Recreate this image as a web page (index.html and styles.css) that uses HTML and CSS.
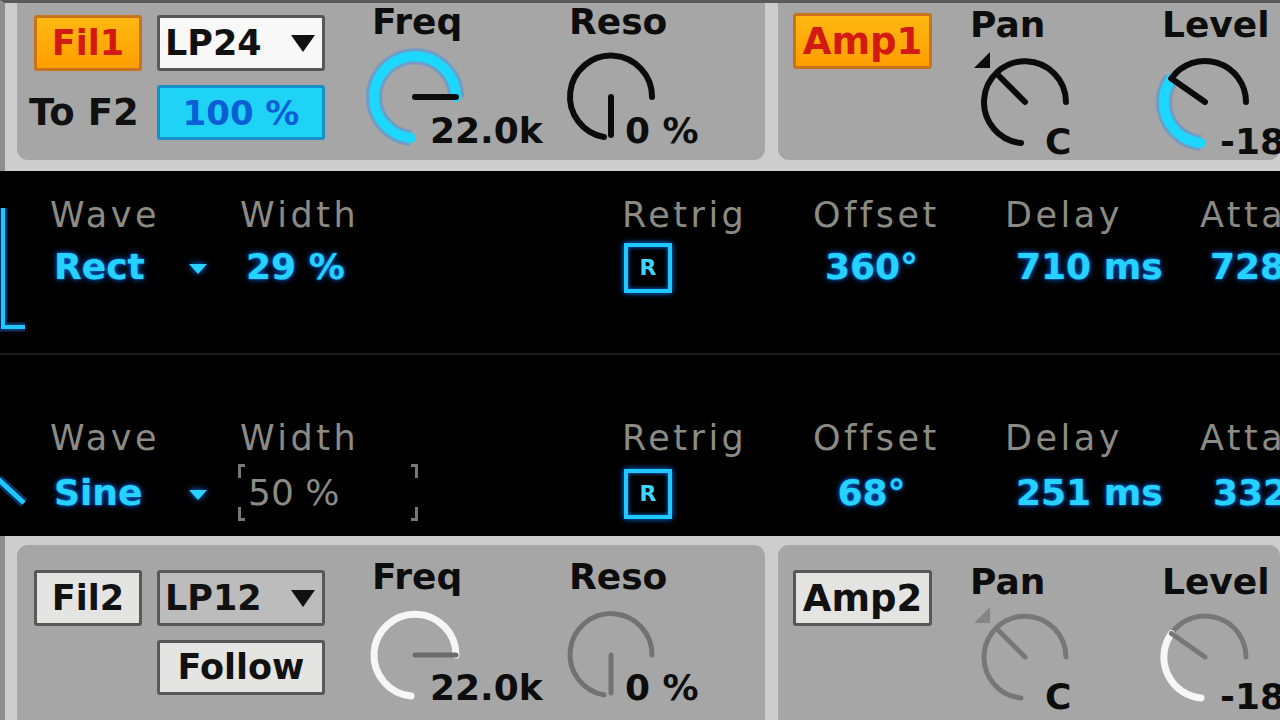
FILE: index.html
```html
<!DOCTYPE html>
<html>
<head>
<meta charset="utf-8">
<title>Analog</title>
<link rel="stylesheet" href="styles.css">
</head>
<body>
<div class="screen">
  <section class="band band-top">
    <div class="panel p-fil">
      <div class="btns">
        <div class="btn btn-on">Fil1</div>
        <div class="btn btn-white dd"><span>LP24</span><span class="tri"></span></div>
        <div class="to">To F2</div>
        <div class="btn btn-cyan">100 %</div>
      </div>
      <div class="knob k-freq">
        <div class="klabel">Freq</div>
        <div class="kbody">
          <svg viewBox="0 0 110 110">
            <path d="M51 96 A41 41 0 1 1 96 55" fill="none" stroke="#0a8cff" stroke-opacity=".35" stroke-width="16"/>
            <path d="M51 96 A41 41 0 1 1 96 55" fill="none" stroke="#1cd8ff" stroke-width="10" stroke-linecap="round"/>
            <line x1="55" y1="55" x2="96" y2="55" stroke="#0b0b0b" stroke-width="6" stroke-linecap="round"/>
          </svg>
          <span class="kval v-freq">22.0k</span>
        </div>
      </div>
      <div class="knob k-reso">
        <div class="klabel">Reso</div>
        <div class="kbody">
          <svg viewBox="0 0 110 110">
            <path d="M48 95 A41 41 0 1 1 96 55" fill="none" stroke="#0b0b0b" stroke-width="6" stroke-linecap="round"/>
            <line x1="55" y1="55" x2="55" y2="93" stroke="#0b0b0b" stroke-width="6" stroke-linecap="round"/>
          </svg>
          <span class="kval v-reso">0 %</span>
        </div>
      </div>
    </div>
    <div class="panel p-amp">
      <div class="btn btn-on amp">Amp1</div>
      <div class="knob k-pan">
        <div class="klabel">Pan</div>
        <div class="kbody">
          <svg viewBox="0 0 110 110">
            <polygon points="20,5 20,21 4,21" fill="#0b0b0b"/>
            <path d="M51 96 A41 41 0 1 1 96 55" fill="none" stroke="#0b0b0b" stroke-width="6" stroke-linecap="round"/>
            <line x1="55" y1="55" x2="27" y2="27" stroke="#0b0b0b" stroke-width="6" stroke-linecap="round"/>
          </svg>
          <span class="kval v-pan">C</span>
        </div>
      </div>
      <div class="knob k-level">
        <div class="klabel">Level</div>
        <div class="kbody">
          <svg viewBox="0 0 110 110">
            <path d="M51 96 A41 41 0 0 1 21.4 31.5" fill="none" stroke="#0a8cff" stroke-opacity=".35" stroke-width="16"/>
            <path d="M51 96 A41 41 0 0 1 21.4 31.5" fill="none" stroke="#1cd8ff" stroke-width="10" stroke-linecap="round"/>
            <path d="M21.4 31.5 A41 41 0 0 1 96 55" fill="none" stroke="#0b0b0b" stroke-width="6" stroke-linecap="round"/>
            <line x1="55" y1="55" x2="21.4" y2="31.5" stroke="#0b0b0b" stroke-width="6" stroke-linecap="round"/>
          </svg>
          <span class="kval v-level">-18 dB</span>
        </div>
      </div>
    </div>
  </section>

  <section class="lfo">
    <div class="lrow r1">
      <div class="col c-icon">
        <svg class="wave-icon" viewBox="0 0 50 182" width="50" height="182">
          <path d="M3 37 V156 H25" fill="none" stroke="#0a7cff" stroke-opacity=".4" stroke-width="9"/>
          <path d="M3 37 V156 H25" fill="none" stroke="#1ec8ff" stroke-width="4"/>
        </svg>
      </div>
      <div class="col c-wave">
        <div class="lab">Wave</div>
        <div class="vrow"><span class="val wv">Rect</span><span class="ctri"></span></div>
      </div>
      <div class="col c-width">
        <div class="lab">Width</div>
        <div class="vrow"><span class="val wd">29 %</span></div>
      </div>
      <div class="col c-retrig">
        <div class="lab">Retrig</div>
        <div class="vrow"><span class="rbox">R</span></div>
      </div>
      <div class="col c-offset">
        <div class="lab">Offset</div>
        <div class="vrow"><span class="val off">360°</span></div>
      </div>
      <div class="col c-delay">
        <div class="lab">Delay</div>
        <div class="vrow"><span class="val dl">710 ms</span></div>
      </div>
      <div class="col c-attack">
        <div class="lab">Attack</div>
        <div class="vrow"><span class="val at">728 ms</span></div>
      </div>
    </div>
    <div class="divider"></div>
    <div class="lrow r2">
      <div class="col c-icon">
        <svg class="wave-icon" viewBox="0 0 50 181" width="50" height="181">
          <path d="M-2 124 L24 148" fill="none" stroke="#0a7cff" stroke-opacity=".4" stroke-width="10"/>
          <path d="M-2 124 L24 148" fill="none" stroke="#1ec8ff" stroke-width="5"/>
        </svg>
      </div>
      <div class="col c-wave">
        <div class="lab">Wave</div>
        <div class="vrow"><span class="val wv">Sine</span><span class="ctri"></span></div>
      </div>
      <div class="col c-width">
        <div class="lab">Width</div>
        <div class="vrow"><div class="bracket"><span class="val-off">50 %</span></div></div>
      </div>
      <div class="col c-retrig">
        <div class="lab">Retrig</div>
        <div class="vrow"><span class="rbox">R</span></div>
      </div>
      <div class="col c-offset">
        <div class="lab">Offset</div>
        <div class="vrow"><span class="val off">68°</span></div>
      </div>
      <div class="col c-delay">
        <div class="lab">Delay</div>
        <div class="vrow"><span class="val dl">251 ms</span></div>
      </div>
      <div class="col c-attack">
        <div class="lab">Attack</div>
        <div class="vrow"><span class="val at2">332 ms</span></div>
      </div>
    </div>
  </section>

  <section class="band band-bot">
    <div class="panel p-fil">
      <div class="btns">
        <div class="btn btn-light">Fil2</div>
        <div class="btn btn-grey dd"><span>LP12</span><span class="tri"></span></div>
        <div class="empty"></div>
        <div class="btn btn-light">Follow</div>
      </div>
      <div class="knob k-freq">
        <div class="klabel">Freq</div>
        <div class="kbody">
          <svg viewBox="0 0 110 110">
            <path d="M51 96 A41 41 0 1 1 96 55" fill="none" stroke="#f6f6f6" stroke-width="7" stroke-linecap="round"/>
            <line x1="55" y1="55" x2="96" y2="55" stroke="#6c6c6c" stroke-width="5" stroke-linecap="round"/>
          </svg>
          <span class="kval v-freq">22.0k</span>
        </div>
      </div>
      <div class="knob k-reso">
        <div class="klabel">Reso</div>
        <div class="kbody">
          <svg viewBox="0 0 110 110">
            <path d="M48 95 A41 41 0 1 1 96 55" fill="none" stroke="#727272" stroke-width="5" stroke-linecap="round"/>
            <line x1="55" y1="55" x2="55" y2="93" stroke="#727272" stroke-width="5" stroke-linecap="round"/>
          </svg>
          <span class="kval v-reso">0 %</span>
        </div>
      </div>
    </div>
    <div class="panel p-amp">
      <div class="btn btn-light amp">Amp2</div>
      <div class="knob k-pan">
        <div class="klabel">Pan</div>
        <div class="kbody">
          <svg viewBox="0 0 110 110">
            <polygon points="20,5 20,21 4,21" fill="#858585"/>
            <path d="M51 96 A41 41 0 1 1 96 55" fill="none" stroke="#777" stroke-width="5" stroke-linecap="round"/>
            <line x1="55" y1="55" x2="27" y2="27" stroke="#777" stroke-width="5" stroke-linecap="round"/>
          </svg>
          <span class="kval v-pan">C</span>
        </div>
      </div>
      <div class="knob k-level">
        <div class="klabel">Level</div>
        <div class="kbody">
          <svg viewBox="0 0 110 110">
            <path d="M21.4 31.5 A41 41 0 0 1 96 55" fill="none" stroke="#777" stroke-width="5" stroke-linecap="round"/>
            <path d="M51 96 A41 41 0 0 1 21.4 31.5" fill="none" stroke="#f6f6f6" stroke-width="7" stroke-linecap="round"/>
            <line x1="55" y1="55" x2="21.4" y2="31.5" stroke="#777" stroke-width="5" stroke-linecap="round"/>
          </svg>
          <span class="kval v-level">-18 dB</span>
        </div>
      </div>
    </div>
  </section>
</div>
</body>
</html>
```

FILE: styles.css
```css
* { box-sizing: border-box; margin: 0; padding: 0; }
html, body { background: #000; }
body {
  width: 1280px;
  height: 720px;
  overflow: hidden;
  font-family: "DejaVu Sans", "Liberation Sans", sans-serif;
}
.screen {
  display: flex;
  flex-direction: column;
  width: 1280px;
  height: 720px;
  background: #000;
  overflow: hidden;
}

/* grey device bands */
.band {
  display: flex;
  gap: 13px;
  background: #cdcdcd;
  border-left: 5px solid #8e8e8e;
  padding-left: 12px;
  flex: none;
}
.band-top {
  height: 171px;
  border-top: 3px solid #5a5a5a;
  padding-bottom: 11px;
}
.band-bot {
  flex: 1;
  padding-top: 9px;
}
.panel {
  background: #a6a6a6;
  display: flex;
  align-items: flex-start;
  flex: none;
}
.band-top .panel { border-radius: 0 0 11px 11px; }
.band-bot .panel { border-radius: 11px 11px 0 0; }
.p-fil { width: 748px; padding-left: 17px; }
.p-amp { flex: 1; min-width: 0; padding-left: 15px; }

/* buttons */
.btns {
  display: grid;
  grid-template-columns: 108px 168px;
  grid-template-rows: 56px 55px;
  gap: 14px 15px;
  flex: none;
}
.band-top .btns { margin-top: 12px; }
.band-bot .btns { margin-top: 25px; }
.btn {
  display: flex;
  align-items: center;
  justify-content: center;
  font-weight: bold;
  font-size: 35px;
  line-height: 1;
  border: 3px solid #585858;
  border-radius: 3px;
  color: #111;
  white-space: nowrap;
}
.btn-on {
  background: linear-gradient(#ffb812, #ff9e00);
  border-color: #c7731c;
  color: #d21a12;
}
.btn-white { background: #f8f8f8; }
.btn-light { background: #e4e4e2; }
.btn-grey { background: #bcbcbc; }
.btn-cyan {
  background: #1ed3f6;
  border-color: #1690c6;
  color: #0b5ed6;
  font-size: 34px;
}
.dd { justify-content: space-between; padding: 0 7px 0 5px; }
.tri {
  width: 0;
  height: 0;
  border-left: 12px solid transparent;
  border-right: 12px solid transparent;
  border-top: 17px solid #111;
}
.to {
  align-self: center;
  margin-left: -5px;
  font-weight: bold;
  font-size: 37px;
  line-height: 1;
  color: #111;
  white-space: nowrap;
}
.amp { width: 139px; height: 56px; flex: none; font-size: 37px; }
.band-top .amp { margin-top: 10px; }
.band-bot .amp { margin-top: 25px; }

/* knobs */
.knob { display: flex; flex-direction: column; flex: none; }
.klabel {
  font-weight: bold;
  font-size: 36px;
  line-height: 36px;
  color: #0d0d0d;
  white-space: nowrap;
}
.kbody { display: grid; }
.kbody > * { grid-area: 1 / 1; }
.kbody svg { width: 110px; height: 110px; display: block; }
.kval {
  font-weight: bold;
  font-size: 36px;
  line-height: 30px;
  color: #0d0d0d;
  white-space: nowrap;
  align-self: start;
  justify-self: start;
}
.k-freq { margin-left: 35px; width: 196px; }
.k-reso { width: 180px; }
.k-freq .klabel { margin-left: 12px; }
.k-reso .klabel { margin-left: 13px; }
.k-pan { margin-left: 38px; width: 180px; }
.k-level .klabel { margin-left: 12px; }

.band-top .p-fil .knob { margin-top: 1px; }
.band-top .p-fil .klabel { margin-bottom: 2px; }
.band-top .p-amp .knob { margin-top: 4px; }
.band-top .p-amp .klabel { margin-bottom: 4px; }
.band-bot .p-fil .knob { margin-top: 14px; }
.band-bot .p-fil .klabel { margin-bottom: 5px; }
.band-bot .p-amp .knob { margin-top: 19px; }
.band-bot .p-amp .klabel { margin-bottom: 2px; }

.v-freq { margin: 74px 0 0 70px; }
.v-reso { margin: 74px 0 0 69px; }
.band-bot .v-freq, .band-bot .v-reso { margin-top: 73px; }
.v-pan { margin: 80px 0 0 75px; }
.v-level { margin: 80px 0 0 70px; }

/* LFO section */
.lfo {
  height: 365px;
  display: flex;
  flex-direction: column;
  background: #000;
  flex: none;
}
.lrow { display: flex; overflow: hidden; }
.r1 { height: 182px; flex: none; }
.r2 { flex: 1; }
.divider { height: 2px; background: #1c1c1c; flex: none; }
.col { display: flex; flex-direction: column; flex: none; }
.r1 .col { padding-top: 27px; }
.r2 .col { padding-top: 66px; }
.lrow .c-icon { width: 50px; padding-top: 0; }
.wave-icon { display: block; }
.c-wave { width: 190px; }
.c-width { width: 382px; }
.c-retrig { width: 191px; }
.c-offset { width: 192px; }
.c-delay { width: 195px; }
.c-attack { width: 200px; }

.lab {
  font-size: 35px;
  line-height: 35px;
  color: #8b8b84;
  letter-spacing: 3.5px;
  white-space: nowrap;
}
.vrow { display: flex; align-items: flex-start; height: 36px; }
.r1 .vrow { margin-top: 16px; }
.r2 .vrow { margin-top: 19px; }
.val {
  font-weight: bold;
  font-size: 36px;
  line-height: 36px;
  color: #26d2ff;
  text-shadow: 0 0 6px rgba(0, 110, 255, .9), 0 0 2px rgba(0, 160, 255, .8);
  white-space: nowrap;
}
.wv { width: 139px; padding-left: 4px; }
.ctri {
  width: 0;
  height: 0;
  margin-top: 15px;
  border-left: 9px solid transparent;
  border-right: 9px solid transparent;
  border-top: 10px solid #26d2ff;
  filter: drop-shadow(0 0 3px #0a7cff);
}
.wd { margin-left: 6px; }
.off { width: 117px; text-align: center; }
.dl { margin-left: 11px; }
.at { margin-left: 10px; }
.at2 { margin-left: 13px; }

.rbox {
  width: 48px;
  height: 50px;
  margin: -6px 0 0 2px;
  border: 4px solid #20c8ff;
  box-shadow: 0 0 6px #0a7cff, inset 0 0 4px #0a7cff;
  display: flex;
  align-items: center;
  justify-content: center;
  color: #3cd6ff;
  font-weight: bold;
  font-size: 22px;
  line-height: 1;
}

.bracket {
  width: 180px;
  height: 57px;
  margin: -11px 0 0 -2px;
  padding: 11px 0 0 10px;
  background:
    linear-gradient(#777, #777) left top / 3px 14px no-repeat,
    linear-gradient(#777, #777) left top / 7px 3px no-repeat,
    linear-gradient(#777, #777) left bottom / 3px 14px no-repeat,
    linear-gradient(#777, #777) left bottom / 7px 3px no-repeat,
    linear-gradient(#777, #777) right top / 3px 14px no-repeat,
    linear-gradient(#777, #777) right top / 7px 3px no-repeat,
    linear-gradient(#777, #777) right bottom / 3px 14px no-repeat,
    linear-gradient(#777, #777) right bottom / 7px 3px no-repeat;
}
.val-off {
  font-size: 36px;
  line-height: 36px;
  color: #8a8a86;
  white-space: nowrap;
}
.empty { display: block; }
```
